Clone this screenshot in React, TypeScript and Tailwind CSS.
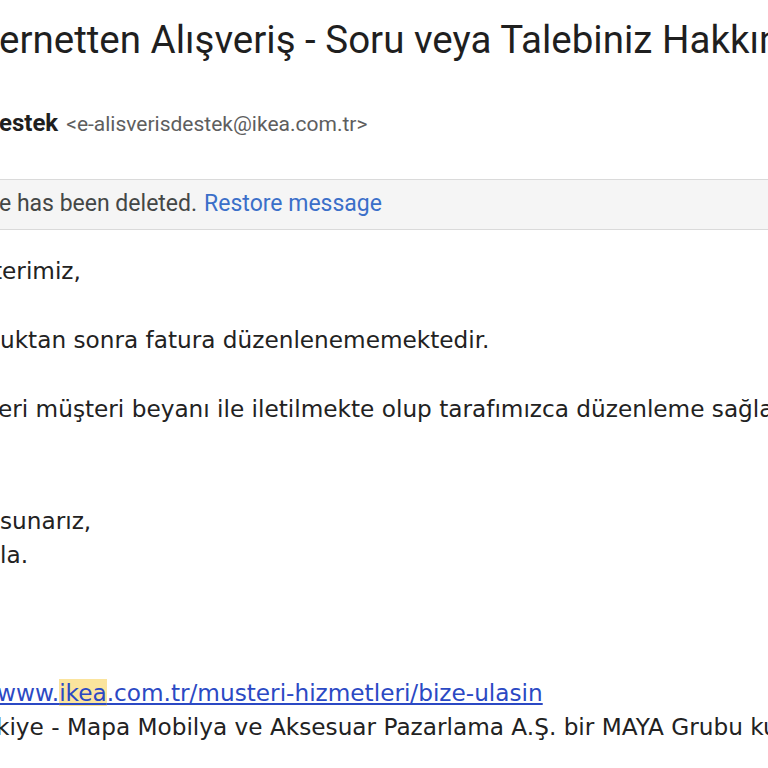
export default function App() {
  return (
    <div className="w-[768px] h-[768px] overflow-hidden bg-white">
      <div className="pt-[20px] whitespace-nowrap">
        <h1 className="text-[38.5px] leading-[40px] text-[#1f1f1f] font-['Roboto',sans-serif] -ml-[1px]">
          ernetten Alışveriş - Soru veya Talebiniz Hakkında
        </h1>

        <div className="mt-[45px] flex items-baseline gap-[8px] font-['Roboto',sans-serif]">
          <span className="text-[24px] font-bold text-[#1f1f1f] -ml-[1px]">estek</span>
          <span className="text-[21px] text-[#5e5e5e]">&lt;e-alisverisdestek@ikea.com.tr&gt;</span>
        </div>

        <div className="mt-[38px] h-[51px] flex items-center bg-[#f5f5f5] border-y border-[#dadada] font-['Roboto',sans-serif] text-[23px]">
          <span className="text-[#444746] -ml-[1px]">e has been deleted.</span>
          <a href="#" className="ml-[7px] text-[#3b6fc9]">Restore message</a>
        </div>

        <div className="mt-[24px] font-['DejaVu_Sans',sans-serif] text-[23.2px] leading-[34px] text-[#222]">
          <p className="-ml-[7px]">terimiz,</p>
          <p className="mt-[35px]">uktan sonra fatura düzenlenememektedir.</p>
          <p className="mt-[35px] -ml-[2px]">eri müşteri beyanı ile iletilmekte olup tarafımızca düzenleme sağlanamamaktadır.</p>
          <p className="mt-[78px]">sunarız,</p>
          <p>la.</p>
          <p className="mt-[104px] -ml-[3px]">
            <a href="#" className="text-[#2b49c4] underline">
              www.<span className="bg-[#fbe49d]">ikea</span>.com.tr/musteri-hizmetleri/bize-ulasin
            </a>
          </p>
          <p className="-ml-[4px]">kiye - Mapa Mobilya ve Aksesuar Pazarlama A.Ş. bir MAYA Grubu kuruluşudur.</p>
        </div>
      </div>
    </div>
  );
}
